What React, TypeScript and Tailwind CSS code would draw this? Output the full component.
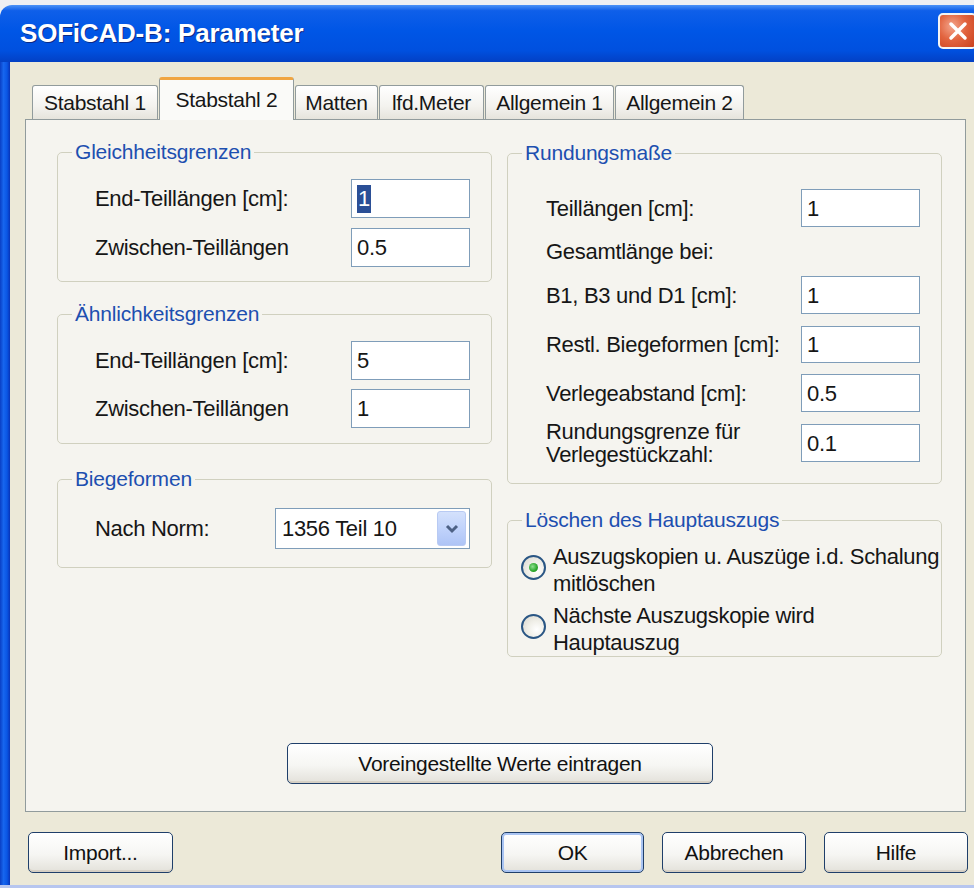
import type { ReactNode } from "react";

type Tab = { label: string; width: string; active?: boolean };

const tabs: Tab[] = [
  { label: "Stabstahl 1", width: "w-[126px]" },
  { label: "Stabstahl 2", width: "w-[135px]", active: true },
  { label: "Matten", width: "w-[83px]" },
  { label: "lfd.Meter", width: "w-[105px]" },
  { label: "Allgemein 1", width: "w-[129px]" },
  { label: "Allgemein 2", width: "w-[129px]" },
];

// padding goes on the inner box so the legend stays near the left corner
function Group({ title, className = "", inner = "", children }: { title: string; className?: string; inner?: string; children: ReactNode }) {
  return (
    <fieldset className={`rounded-[5px] border border-[#d0d0bf] ${className}`}>
      <legend className="ml-[14px] px-[3px] text-[21px] leading-[26px] tracking-[-0.2px] text-[#1d4fb0]">{title}</legend>
      <div className={inner}>{children}</div>
    </fieldset>
  );
}

function Edit({ value, selected = false, className = "h-[39px]" }: { value: string; selected?: boolean; className?: string }) {
  return (
    <div className={`flex w-[119px] items-center border border-[#7f9db9] bg-white px-[5px] text-[22px] ${className}`}>
      {selected ? <span className="bg-[#2b4f96] px-[1px] leading-[28px] text-white">{value}</span> : value}
    </div>
  );
}

function Row({ label, value, selected, className = "", edit }: { label: string; value: string; selected?: boolean; className?: string; edit?: string }) {
  return (
    <div className={`flex items-center justify-between ${className}`}>
      <span>{label}</span>
      <Edit value={value} selected={selected} className={edit} />
    </div>
  );
}

function XpButton({ children, className = "", isDefault = false }: { children: ReactNode; className?: string; isDefault?: boolean }) {
  return (
    <button
      className={`flex h-[41px] items-center justify-center rounded-[5px] border border-[#1f3f6a] bg-[linear-gradient(180deg,#ffffff_0%,#f6f6f3_55%,#e3e1da_100%)] text-[21px] text-[#111] ${
        isDefault ? "shadow-[inset_0_0_0_2px_#a9c4f2]" : "shadow-[inset_0_-2px_0_#d6d0c5]"
      } ${className}`}
    >
      {children}
    </button>
  );
}

function Radio({ checked = false }: { checked?: boolean }) {
  return (
    <span className="mb-[6px] flex h-[25px] w-[25px] shrink-0 items-center justify-center rounded-full border-[2px] border-[#2a5684] bg-[radial-gradient(circle_at_65%_65%,#ffffff_0%,#f0efe8_45%,#d5d4cc_100%)]">
      {checked && <span className="h-[9px] w-[9px] rounded-full bg-[radial-gradient(circle_at_40%_40%,#8fe08f_0%,#2aa52a_60%,#1a8a1a_100%)]" />}
    </span>
  );
}

export default function App() {
  return (
    <div className="h-[888px] w-[974px] overflow-hidden bg-[#eef0f3] pt-[5px] font-['Liberation_Sans',Arial,sans-serif] text-[22px] tracking-[-0.3px] text-[#161616]">
      <div className="flex h-[883px] flex-col">
        {/* title bar */}
        <div className="flex h-[57px] shrink-0 items-center rounded-tl-[12px] bg-[linear-gradient(180deg,#4c93f7_0%,#0f5fe9_10%,#0056e6_45%,#0050df_80%,#0340c4_100%)] pl-[20px]">
          <span className="text-[26px] font-bold tracking-[-0.2px] text-white [text-shadow:1px_1px_0_#0b2a86]">SOFiCAD-B: Parameter</span>
          <span className="-mr-[3px] mb-[6px] ml-auto flex h-[36px] w-[39px] items-center justify-center rounded-[5px] border-[2px] border-[#f4f4f4] bg-[radial-gradient(circle_at_35%_35%,#f3a58c_0%,#e2643f_45%,#c83f1c_100%)]">
            <svg width="22" height="22" viewBox="0 0 22 22">
              <path d="M4 4 L18 18 M18 4 L4 18" stroke="#fff" strokeWidth="3.5" strokeLinecap="round" />
            </svg>
          </span>
        </div>

        <div className="flex flex-1">
          {/* left window frame */}
          <div className="w-[10px] bg-[linear-gradient(90deg,#0a3fc4_0%,#1766ee_35%,#0a56e4_70%,#0733b8_100%)]" />

          <div className="flex flex-1 flex-col bg-[#ece9d8] pt-[15px]">
            {/* tab strip */}
            <div className="relative z-10 ml-[22px] flex h-[42px] items-end gap-[1px]">
              {tabs.map((t) =>
                t.active ? (
                  <div
                    key={t.label}
                    className={`-mb-[1px] flex h-[43px] items-center justify-center rounded-t-[3px] border-x border-t-[3px] border-x-[#919b9c] border-t-[#f0a541] bg-[#fafaf8] text-[21px] ${t.width}`}
                  >
                    {t.label}
                  </div>
                ) : (
                  <div
                    key={t.label}
                    className={`flex h-[34px] items-center justify-center rounded-t-[3px] border border-b-0 border-[#919b9c] bg-[linear-gradient(180deg,#ffffff_0%,#f4f3ef_60%,#e6e4dc_100%)] text-[21px] ${t.width}`}
                  >
                    {t.label}
                  </div>
                )
              )}
            </div>

            {/* tab page */}
            <div className="ml-[15px] flex h-[693px] w-[941px] flex-col border border-[#919b9c] bg-[#f5f4ef]">
              <div className="flex gap-[15px] pl-[31px] pt-[19px]">
                {/* left column */}
                <div className="flex w-[435px] flex-col">
                  <Group title="Gleichheitsgrenzen" inner="flex flex-col gap-[10px] pb-[14px] pl-[37px] pr-[21px] pt-[14px]">
                    <Row label="End-Teillängen [cm]:" value="1" selected />
                    <Row label="Zwischen-Teillängen" value="0.5" />
                  </Group>

                  <Group title="Ähnlichkeitsgrenzen" className="mt-[19px]" inner="flex flex-col gap-[9px] pb-[15px] pl-[37px] pr-[21px] pt-[14px]">
                    <Row label="End-Teillängen [cm]:" value="5" />
                    <Row label="Zwischen-Teillängen" value="1" />
                  </Group>

                  <Group title="Biegeformen" className="mt-[22px]" inner="flex items-center justify-between pb-[18px] pl-[37px] pr-[21px] pt-[16px]">
                    <span>Nach Norm:</span>
                    <div className="flex h-[41px] w-[195px] items-center border border-[#7f9db9] bg-white pl-[6px] pr-[3px]">
                      <span className="flex-1 text-[22px]">1356 Teil 10</span>
                      <span className="flex h-[35px] w-[29px] items-center justify-center rounded-[3px] border border-[#b8caf3] bg-[linear-gradient(180deg,#d4e1fc_0%,#c1d3fb_50%,#aec4f6_100%)]">
                        <svg width="14" height="10" viewBox="0 0 14 10">
                          <path d="M2 2 L7 7 L12 2" fill="none" stroke="#4d6185" strokeWidth="3" />
                        </svg>
                      </span>
                    </div>
                  </Group>
                </div>

                {/* right column */}
                <div className="mt-[1px] flex w-[435px] flex-col">
                  <Group title="Rundungsmaße" inner="flex flex-col pb-[21px] pl-[38px] pr-[21px] pt-[23px]">
                    <Row label="Teillängen [cm]:" value="1" edit="h-[38px]" />
                    <div className="flex h-[49px] items-center">Gesamtlänge bei:</div>
                    <Row label="B1, B3 und D1 [cm]:" value="1" edit="h-[38px]" />
                    <Row label="Restl. Biegeformen [cm]:" value="1" className="mt-[12px]" edit="h-[37px]" />
                    <Row label="Verlegeabstand [cm]:" value="0.5" className="mt-[11px]" edit="h-[38px]" />
                    <div className="mt-[12px] flex h-[38px] items-center justify-between">
                      <span className="leading-[23px]">
                        Rundungsgrenze für
                        <br />
                        Verlegestückzahl:
                      </span>
                      <Edit value="0.1" className="h-[38px]" />
                    </div>
                  </Group>

                  <Group title="Löschen des Hauptauszugs" className="mt-[23px]" inner="flex flex-col gap-[5px] pl-[13px] pt-[10px] leading-[27px]">
                    <div className="flex items-center gap-[7px]">
                      <Radio checked />
                      <span>
                        Auszugskopien u. Auszüge i.d. Schalung
                        <br />
                        mitlöschen
                      </span>
                    </div>
                    <div className="flex items-center gap-[7px]">
                      <Radio />
                      <span>
                        Nächste Auszugskopie wird
                        <br />
                        Hauptauszug
                      </span>
                    </div>
                  </Group>
                </div>
              </div>

              <XpButton className="mb-[27px] ml-[261px] mt-auto w-[426px]">Voreingestellte Werte eintragen</XpButton>
            </div>

            {/* dialog buttons */}
            <div className="mr-[6px] mt-[20px] flex gap-[18px]">
              <XpButton className="ml-[18px] mr-auto w-[145px]">Import...</XpButton>
              <XpButton className="w-[143px]" isDefault>
                OK
              </XpButton>
              <XpButton className="w-[144px]">Abbrechen</XpButton>
              <XpButton className="w-[144px]">Hilfe</XpButton>
            </div>
          </div>
        </div>

        {/* bottom window frame */}
        <div className="h-[3px] shrink-0 bg-[#b7c6ef]" />
      </div>
    </div>
  );
}
